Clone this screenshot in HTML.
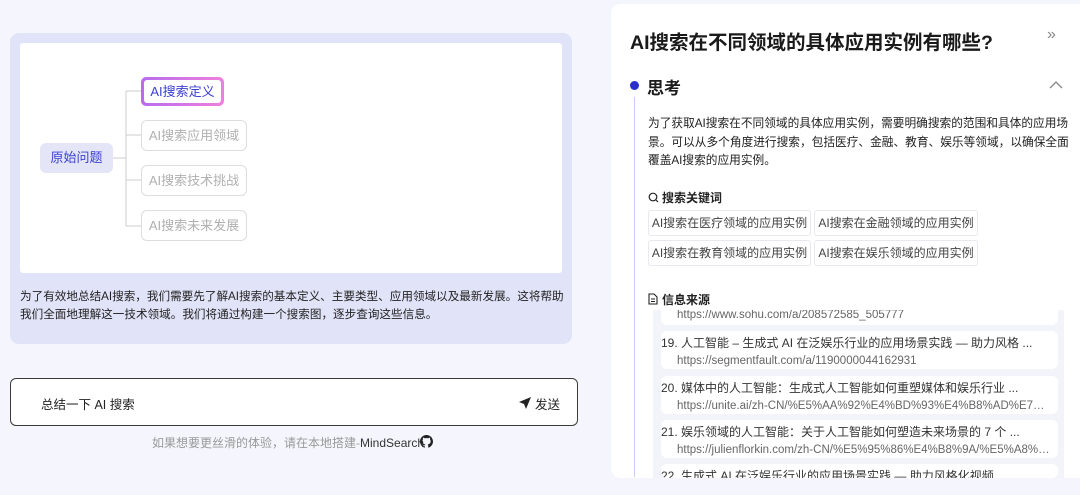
<!DOCTYPE html>
<html><head><meta charset="utf-8"><style>
*{margin:0;padding:0;box-sizing:border-box}
body{width:1080px;height:495px;overflow:hidden;background:#f5f6fd;font-family:"Liberation Sans","Noto Sans CJK SC",sans-serif;position:relative;color:#222}
.abs{position:absolute}
.lp{left:10px;top:33px;width:562px;height:311px;background:#e1e4f8;border-radius:9px}
.card{left:20px;top:43px;width:542px;height:230px;background:#fff;border-radius:3px}
.node{position:absolute;border:1px solid #ddd;border-radius:6px;color:#b0b0b0;font-size:13px;line-height:29px;text-align:center;background:#fff}
.para{font-size:12.5px;line-height:18px;color:#222;white-space:nowrap}
.rp{left:611px;top:4px;width:480px;height:474px;background:#fff;border-radius:10px}
.tag{position:absolute;height:26px;border:1px solid #e8e8ee;border-radius:3px;font-size:12px;line-height:24px;color:#444;text-align:center;white-space:nowrap}
.src{position:absolute;left:661px;width:397px;background:#fff;border-radius:6px;font-size:12px;color:#333;padding:4px 0 0 0}
.src .t{line-height:17px;white-space:nowrap}
.src .u{padding-left:16px;color:#666;font-size:11.5px;line-height:18px;white-space:nowrap;overflow:hidden;text-overflow:ellipsis;width:392px}
</style></head><body>
<div class="abs lp"></div>
<div class="abs card"></div>
<svg class="abs" style="left:0;top:0" width="300" height="280"><path d="M113 158H126M126 91V226M126 91H142M126 135H141M126 180H141M126 226H141" stroke="#ccc" fill="none"/></svg>
<div class="abs" style="left:40px;top:143px;width:73px;height:30px;background:#e4e6f8;border-radius:6px;color:#3a3fd2;font-size:13px;line-height:30px;text-align:center">原始问题</div>
<div class="abs" style="left:141px;top:77px;width:83px;height:29px;border-radius:5px;background:linear-gradient(90deg,#b66cf0,#f07fdc);padding:3px"><div style="background:#fff;border-radius:3px;height:23px;color:#3b3fd0;font-size:13px;line-height:23px;text-align:center">AI搜索定义</div></div>
<div class="node" style="left:141px;top:120px;width:106px;height:31px">AI搜索应用领域</div>
<div class="node" style="left:141px;top:165px;width:106px;height:31px">AI搜索技术挑战</div>
<div class="node" style="left:141px;top:210px;width:106px;height:31px">AI搜索未来发展</div>
<div class="abs para" style="left:20px;top:288px;font-size:11.6px">为了有效地总结AI搜索，我们需要先了解AI搜索的基本定义、主要类型、应用领域以及最新发展。这将帮助<br>我们全面地理解这一技术领域。我们将通过构建一个搜索图，逐步查询这些信息。</div>
<div class="abs" style="left:10px;top:378px;width:568px;height:48px;border:1.5px solid #3a3a3a;border-radius:6px;background:#fff"></div>
<div class="abs" style="left:41px;top:394px;font-size:12.5px;color:#222">总结一下 AI 搜索</div>
<svg class="abs" style="left:518px;top:396px" width="14" height="14" viewBox="0 0 14 14"><path d="M13 1L1 6L6 8L8 13Z" fill="#222"/></svg>
<div class="abs" style="left:535px;top:394px;font-size:12.5px;color:#222">发送</div>
<div class="abs" style="left:152px;top:434px;font-size:12px;color:#999">如果想要更丝滑的体验，请在本地搭建-<span style="color:#333">MindSearch</span></div>
<svg class="abs" style="left:420px;top:435px" width="13" height="13" viewBox="0 0 16 16"><path d="M8 0C3.6 0 0 3.6 0 8c0 3.5 2.3 6.5 5.5 7.6.4.1.5-.2.5-.4v-1.4c-2.2.5-2.7-1-2.7-1-.4-.9-.9-1.2-.9-1.2-.7-.5.1-.5.1-.5.8.1 1.2.8 1.2.8.7 1.3 1.9.9 2.3.7.1-.5.3-.9.5-1.1-1.8-.2-3.6-.9-3.6-4 0-.9.3-1.6.8-2.1-.1-.2-.4-1 .1-2.1 0 0 .7-.2 2.2.8.6-.2 1.3-.3 2-.3s1.4.1 2 .3c1.5-1 2.2-.8 2.2-.8.4 1.1.2 1.9.1 2.1.5.6.8 1.3.8 2.1 0 3.1-1.9 3.7-3.6 3.9.3.3.6.8.6 1.5v2.2c0 .2.1.5.6.4C13.7 14.5 16 11.5 16 8c0-4.4-3.6-8-8-8z" fill="#222"/></svg>

<div class="abs rp"></div>
<div class="abs" style="left:630px;top:26px;font-size:19.5px;font-weight:bold;color:#1a1a1a;white-space:nowrap">AI搜索在不同领域的具体应用实例有哪些?</div>
<div class="abs" style="left:1047px;top:26px;font-size:16px;color:#888">»</div>
<div class="abs" style="left:630px;top:81px;width:9px;height:9px;border-radius:50%;background:#2a2fcc"></div>
<div class="abs" style="left:647px;top:74px;font-size:17px;font-weight:bold;color:#1a1a1a">思考</div>
<svg class="abs" style="left:1049px;top:80px" width="14" height="9"><path d="M1 8L7 2L13 8" stroke="#888" stroke-width="1.3" fill="none"/></svg>
<div class="abs" style="left:634px;top:97px;width:1px;height:380px;background:#c9cdf5"></div>
<div class="abs para" style="left:648px;top:115px;font-size:11.7px;line-height:18.5px;color:#222">为了获取AI搜索在不同领域的具体应用实例，需要明确搜索的范围和具体的应用场<br>景。可以从多个角度进行搜索，包括医疗、金融、教育、娱乐等领域，以确保全面<br>覆盖AI搜索的应用实例。</div>
<svg class="abs" style="left:648px;top:192px" width="11" height="11"><circle cx="5" cy="5" r="3.8" stroke="#222" stroke-width="1.2" fill="none"/><path d="M8 8L10 10" stroke="#222" stroke-width="1.2"/></svg>
<div class="abs" style="left:662px;top:189px;font-size:12px;font-weight:bold;color:#222">搜索关键词</div>
<div class="tag" style="left:648px;top:210px;width:163px">AI搜索在医疗领域的应用实例</div>
<div class="tag" style="left:814px;top:210px;width:164px">AI搜索在金融领域的应用实例</div>
<div class="tag" style="left:648px;top:240px;width:163px">AI搜索在教育领域的应用实例</div>
<div class="tag" style="left:814px;top:240px;width:164px">AI搜索在娱乐领域的应用实例</div>
<div class="abs" style="left:653px;top:310px;width:411px;height:168px;background:#f3f4f9"></div>
<div class="src" style="top:298px;height:27px;padding:0;overflow:hidden"><div class="u" style="line-height:18px;padding-top:8px">https://www.sohu.com/a/208572585_505777</div></div>
<div class="abs" style="left:640px;top:284px;width:430px;height:26px;background:#fff"></div>
<svg class="abs" style="left:648px;top:293px" width="10" height="12"><path d="M1 1H6L9 4V11H1Z M3 6H7M3 8.5H7" stroke="#222" stroke-width="1.1" fill="none"/></svg>
<div class="abs" style="left:662px;top:291px;font-size:12px;font-weight:bold;color:#222">信息来源</div>
<div class="src" style="top:331px;height:38px"><div class="t">19. 人工智能 – 生成式 AI 在泛娱乐行业的应用场景实践 — 助力风格 ...</div><div class="u">https://segmentfault.com/a/1190000044162931</div></div>
<div class="src" style="top:376px;height:38px"><div class="t">20. 媒体中的人工智能：生成式人工智能如何重塑媒体和娱乐行业 ...</div><div class="u">https://unite.ai/zh-CN/%E5%AA%92%E4%BD%93%E4%B8%AD%E7%9A%88</div></div>
<div class="src" style="top:420px;height:38px"><div class="t">21. 娱乐领域的人工智能：关于人工智能如何塑造未来场景的 7 个 ...</div><div class="u">https://julienflorkin.com/zh-CN/%E5%95%86%E4%B8%9A/%E5%A8%B1%E4%B9</div></div>
<div class="src" style="top:464px;height:14px;overflow:hidden"><div class="t">22. 生成式 AI 在泛娱乐行业的应用场景实践 — 助力风格化视频</div></div>
<div class="abs" style="left:600px;top:478px;width:480px;height:17px;background:#f5f6fd"></div>
</body></html>
